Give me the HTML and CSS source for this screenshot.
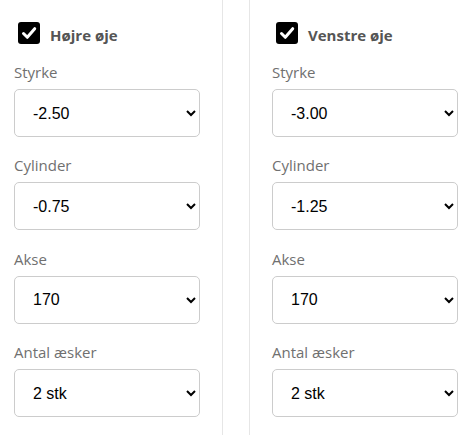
FILE: index.html
```html
<!DOCTYPE html>
<html lang="da">
<head>
    <meta charset="UTF-8">
    <meta name="viewport" content="width=device-width, initial-scale=1.0">
    <title>Linser</title>
    <link rel="stylesheet" href="styles.css">
</head>
<body>
    <div class="eyes">
        <!-- Højre øje -->
        <div class="eye eye-right">
            <label class="eye-head">
                <span class="check">
                    <svg viewBox="0 0 22 22" width="22" height="22"><path d="M5.5 11.5l3.8 3.8 7.4-8.6" fill="none" stroke="#fff" stroke-width="3" stroke-linecap="round" stroke-linejoin="round"/></svg>
                </span>
                <span class="eye-title">Højre øje</span>
            </label>
            <div class="field">
                <label>Styrke</label>
                <select><option>-2.50</option></select>
            </div>
            <div class="field">
                <label>Cylinder</label>
                <select><option>-0.75</option></select>
            </div>
            <div class="field">
                <label>Akse</label>
                <select><option>170</option></select>
            </div>
            <div class="field">
                <label>Antal æsker</label>
                <select><option>2 stk</option></select>
            </div>
        </div>

        <!-- Venstre øje -->
        <div class="eye eye-left">
            <label class="eye-head">
                <span class="check">
                    <svg viewBox="0 0 22 22" width="22" height="22"><path d="M5.5 11.5l3.8 3.8 7.4-8.6" fill="none" stroke="#fff" stroke-width="3" stroke-linecap="round" stroke-linejoin="round"/></svg>
                </span>
                <span class="eye-title">Venstre øje</span>
            </label>
            <div class="field">
                <label>Styrke</label>
                <select><option>-3.00</option></select>
            </div>
            <div class="field">
                <label>Cylinder</label>
                <select><option>-1.25</option></select>
            </div>
            <div class="field">
                <label>Akse</label>
                <select><option>170</option></select>
            </div>
            <div class="field">
                <label>Antal æsker</label>
                <select><option>2 stk</option></select>
            </div>
        </div>
    </div>
</body>
</html>
```

FILE: styles.css
```css
/* Global */
body {
    margin: 0;
    font-family: 'Open Sans', sans-serif;
    background: #fff;
}

/* To kolonner */
.eyes {
    display: flex;
    gap: 26px;
    min-height: 100vh;
}

.eye {
    width: 186px;
    padding-top: 22px;
}

.eye-right {
    padding-left: 14px;
    padding-right: 22px;
    border-right: 1px solid #e6e6e6;
}

.eye-left {
    padding-left: 22px;
    padding-right: 12px;
    border-left: 1px solid #e6e6e6;
}

/* Overskrift med afkrydsning */
.eye-head {
    display: flex;
    align-items: center;
    gap: 10px;
    height: 22px;
    padding-left: 4px;
    margin-bottom: 18px;
}

.check {
    width: 22px;
    height: 22px;
    background: #000;
    border-radius: 3px;
    display: flex;
}

.eye-title {
    font-weight: 700;
    font-size: 15px;
    color: #555;
    padding-top: 3px;
}

/* Felter */
.field {
    margin-bottom: 18.4px;
}

.field label {
    display: block;
    font-size: 15px;
    line-height: 20px;
    color: #707070;
    margin-bottom: 7px;
}

.field select {
    width: 100%;
    height: 48px;
    border: 1px solid #ccc;
    border-radius: 5px;
    background: #fff;
    padding-left: 14px;
    font-family: 'Liberation Sans', Arial, sans-serif;
    font-size: 16px;
    color: #000;
}
```
